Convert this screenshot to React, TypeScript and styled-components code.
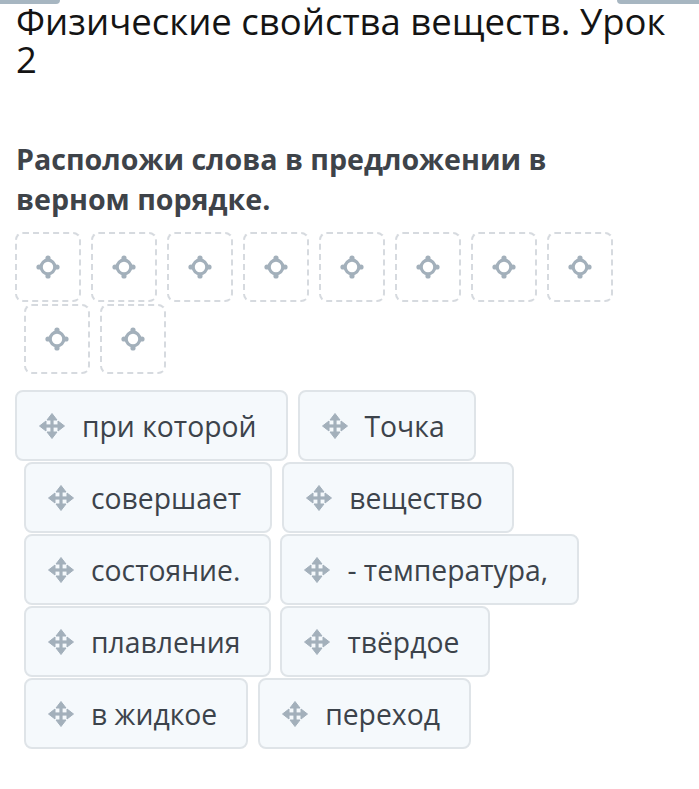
import React from "react";
import styled, { createGlobalStyle } from "styled-components";

const Global = createGlobalStyle`
  html, body { margin: 0; padding: 0; background: #ffffff; }
  body { font-family: "Open Sans", "Noto Sans", sans-serif; }
`;

const Page = styled.div`
  width: 699px;
  height: 789px;
  overflow: hidden;
  position: relative;
  background: #fff;
`;

const TopStrip = styled.div`
  display: flex;
  justify-content: space-between;
  height: 4px;
`;

const TopTab = styled.div<{ $w: number; $side: "l" | "r" }>`
  width: ${(p) => p.$w}px;
  height: 4px;
  background: #a7b6c1;
  border-radius: ${(p) => (p.$side === "l" ? "0 0 6px 0" : "0 0 0 6px")};
`;

const Title = styled.h1`
  margin: -2px 0 0 16px;
  font-family: "Open Sans", sans-serif;
  font-weight: 400;
  font-size: 36.5px;
  line-height: 38px;
  color: #141414;
  width: 660px;
`;

const Question = styled.h2`
  margin: 61px 0 0 16px;
  font-family: "Open Sans", sans-serif;
  font-weight: 700;
  font-size: 28.6px;
  line-height: 40px;
  color: #3e4349;
  width: 600px;
`;

const SlotArea = styled.div`
  margin-top: 13px;
  display: flex;
  flex-direction: column;
  gap: 2px;
`;

const Row = styled.div<{ $offset: number; $gap?: number }>`
  display: flex;
  gap: ${(p) => p.$gap ?? 10}px;
  padding-left: ${(p) => p.$offset}px;
`;

const Slot = styled.div`
  box-sizing: border-box;
  width: 66px;
  height: 70px;
  border: 2px dashed #d6dadf;
  border-radius: 8px;
  display: flex;
  align-items: center;
  justify-content: center;
  background: #fff;
`;

const TileArea = styled.div`
  margin-top: 16px;
  display: flex;
  flex-direction: column;
  gap: 1px;
`;

const Tile = styled.div`
  box-sizing: border-box;
  height: 71px;
  display: flex;
  align-items: center;
  gap: 16px;
  padding: 0 29px 0 21px;
  border: 2px solid #dfe4e8;
  border-radius: 8px;
  background: #f5f9fc;
  font-family: "Open Sans", sans-serif;
  font-size: 28.3px;
  color: #3c434b;
  white-space: nowrap;
`;

const IconWrap = styled.span`
  display: inline-flex;
  width: 28px;
  height: 28px;
  flex: none;
`;

const ICON = "#a3b0bb";

const MoveIcon = () => (
  <IconWrap>
    <svg width="28" height="28" viewBox="0 0 28 28">
      <g stroke={ICON} strokeWidth="3.2" fill="none">
        <line x1="14" y1="6" x2="14" y2="22" />
        <line x1="6" y1="14" x2="22" y2="14" />
      </g>
      <g fill={ICON} stroke={ICON} strokeWidth="1" strokeLinejoin="round">
        <polygon points="14,1.5 9,8 19,8" />
        <polygon points="14,26.5 9,20 19,20" />
        <polygon points="1.5,14 8,9 8,19" />
        <polygon points="26.5,14 20,9 20,19" />
      </g>
    </svg>
  </IconWrap>
);

const TargetIcon = () => (
  <svg width="26" height="26" viewBox="0 0 26 26">
    <circle cx="13" cy="13" r="6.8" stroke={ICON} strokeWidth="3.2" fill="none" />
    <g fill={ICON}>
      <circle cx="13" cy="4" r="2.6" />
      <circle cx="13" cy="22" r="2.6" />
      <circle cx="4" cy="13" r="2.6" />
      <circle cx="22" cy="13" r="2.6" />
    </g>
  </svg>
);

const slotRows = [
  { offset: 15, count: 8 },
  { offset: 24, count: 2 },
];

const tileRows: { offset: number; gap: number; words: string[] }[] = [
  { offset: 15, gap: 10, words: ["при которой", "Точка"] },
  { offset: 24, gap: 10, words: ["совершает", "вещество"] },
  { offset: 24, gap: 9, words: ["состояние.", "- температура,"] },
  { offset: 24, gap: 9, words: ["плавления", "твёрдое"] },
  { offset: 24, gap: 10, words: ["в жидкое", "переход"] },
];

export default function App() {
  return (
    <Page>
      <Global />
      <TopStrip>
        <TopTab $w={60} $side="l" />
        <TopTab $w={82} $side="r" />
      </TopStrip>
      <Title>Физические свойства веществ. Урок 2</Title>
      <Question>Расположи слова в предложении в верном порядке.</Question>
      <SlotArea>
        {slotRows.map((r, i) => (
          <Row key={i} $offset={r.offset}>
            {Array.from({ length: r.count }).map((_, j) => (
              <Slot key={j}>
                <TargetIcon />
              </Slot>
            ))}
          </Row>
        ))}
      </SlotArea>
      <TileArea>
        {tileRows.map((r, i) => (
          <Row key={i} $offset={r.offset} $gap={r.gap}>
            {r.words.map((w) => (
              <Tile key={w}>
                <MoveIcon />
                <span>{w}</span>
              </Tile>
            ))}
          </Row>
        ))}
      </TileArea>
    </Page>
  );
}
